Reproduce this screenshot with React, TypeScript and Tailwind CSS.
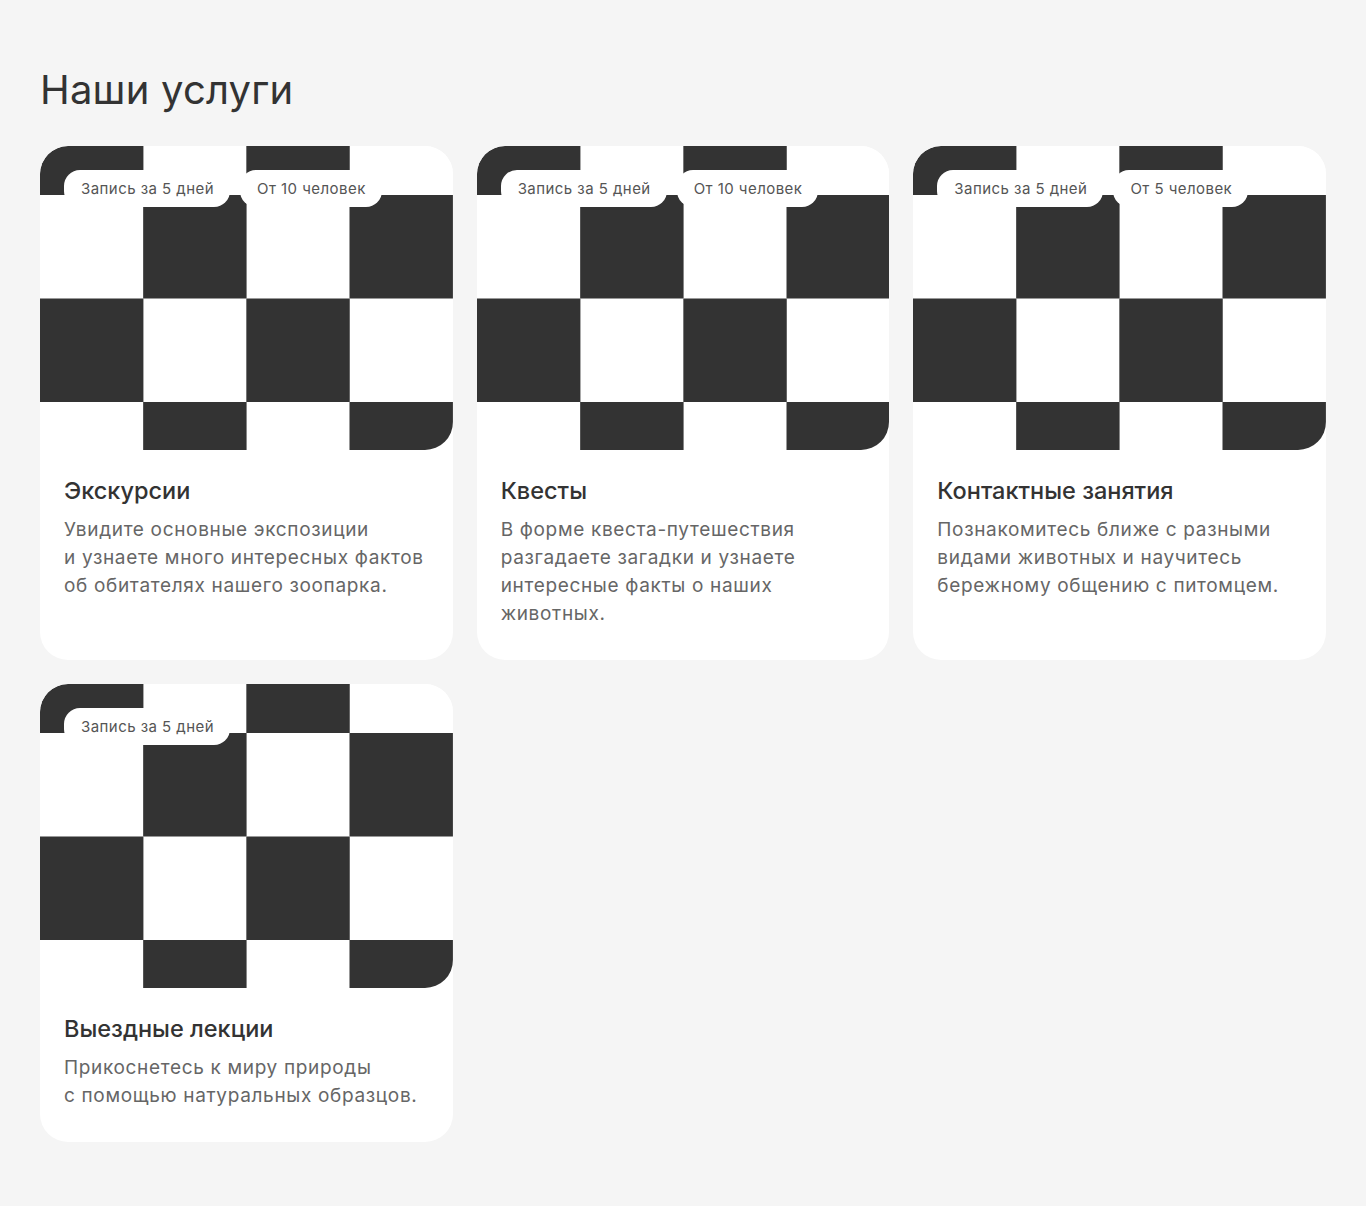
import React from "react";

type Service = {
  title: string;
  lines: string[];
  tags: string[];
};

const services: Service[] = [
  {
    title: "Экскурсии",
    lines: [
      "Увидите основные экспозиции",
      "и узнаете много интересных фактов",
      "об обитателях нашего зоопарка.",
    ],
    tags: ["Запись за 5 дней", "От 10 человек"],
  },
  {
    title: "Квесты",
    lines: [
      "В форме квеста-путешествия",
      "разгадаете загадки и узнаете",
      "интересные факты о наших",
      "животных.",
    ],
    tags: ["Запись за 5 дней", "От 10 человек"],
  },
  {
    title: "Контактные занятия",
    lines: [
      "Познакомитесь ближе с разными",
      "видами животных и научитесь",
      "бережному общению с питомцем.",
    ],
    tags: ["Запись за 5 дней", "От 5 человек"],
  },
  {
    title: "Выездные лекции",
    lines: ["Прикоснетесь к миру природы", "с помощью натуральных образцов."],
    tags: ["Запись за 5 дней"],
  },
];

function Checker() {
  const cols = [0, 103.25, 206.5, 309.75];
  const rows = [
    { y: -54.5, dark: [0, 2] },
    { y: 49, dark: [1, 3] },
    { y: 152.5, dark: [0, 2] },
    { y: 256, dark: [1, 3] },
  ];
  return (
    <svg
      viewBox="0 0 413 304"
      preserveAspectRatio="none"
      className="absolute inset-0 h-full w-full"
    >
      <rect x="0" y="0" width="413" height="304" fill="#ffffff" />
      {rows.map((r, ri) =>
        r.dark.map((c) => (
          <rect
            key={`${ri}-${c}`}
            x={cols[c]}
            y={r.y}
            width={103.5}
            height={103.5}
            fill="#333333"
          />
        ))
      )}
    </svg>
  );
}

function Card({ s }: { s: Service }) {
  return (
    <div className="flex flex-col overflow-hidden rounded-[28px] bg-white">
      <div className="relative h-[304px] overflow-hidden rounded-tl-[28px] rounded-br-[28px]">
        <Checker />
        <div className="absolute left-6 top-6 flex gap-[10px]">
          {s.tags.map((t) => (
            <span
              key={t}
              className="rounded-2xl bg-white py-2 pl-[17px] pr-4 text-[15px] leading-[21px] tracking-[0.03em] text-[#555555]"
            >
              {t}
            </span>
          ))}
        </div>
      </div>
      <div className="px-6 pb-8 pt-[26px]">
        <h3 className="text-[23.5px] font-medium leading-[30px] text-[#333333]">
          {s.title}
        </h3>
        <p className="mt-[10px] text-[19px] leading-[28px] tracking-[0.035em] text-[#666666]">
          {s.lines.map((l, i) => (
            <React.Fragment key={i}>
              {l}
              {i < s.lines.length - 1 && <br />}
            </React.Fragment>
          ))}
        </p>
      </div>
    </div>
  );
}

export default function App() {
  return (
    <div
      className="min-h-[1206px] bg-[#f5f5f5] px-10 pb-16 pt-[66px]"
      style={{ fontFamily: "Inter, 'Noto Sans', sans-serif" }}
    >
      <h2 className="mb-[32px] text-[40px] font-normal leading-[48px] tracking-[0.005em] text-[#333333]">
        Наши услуги
      </h2>
      <div className="grid grid-cols-3 gap-6">
        {services.map((s) => (
          <Card key={s.title} s={s} />
        ))}
      </div>
    </div>
  );
}
